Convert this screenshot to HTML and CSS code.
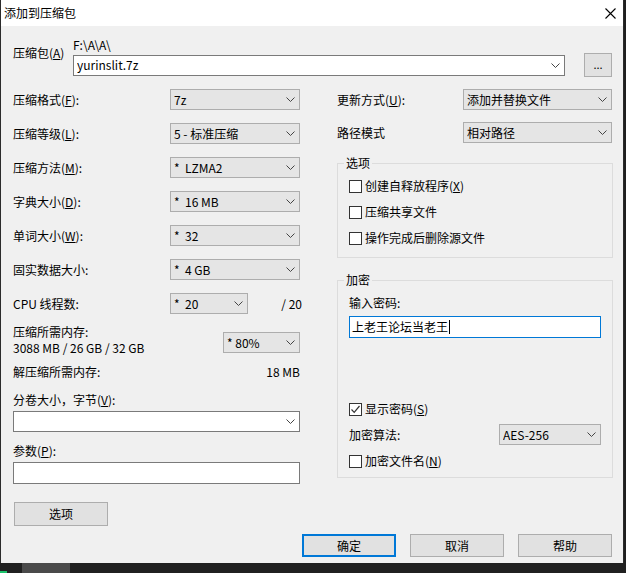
FILE: index.html
```html
<!DOCTYPE html>
<html lang="zh-CN">
<head>
<meta charset="utf-8">
<title>添加到压缩包</title>
<link rel="stylesheet" href="styles.css">
</head>
<body>
<div class="window">
  <div class="titlebar">
    <span class="title">添加到压缩包</span>
    <span class="close"><svg width="11" height="11" viewBox="0 0 11 11"><path d="M0.5 0.5 L10.5 10.5 M10.5 0.5 L0.5 10.5" stroke="#000" stroke-width="1.1" fill="none"/></svg></span>
  </div>
  <div class="content">
    <div class="archive-row">
      <div class="archive-label">压缩包(<u>A</u>)</div>
      <div class="archive-fields">
        <div class="path">F:\A\A\</div>
        <div class="archive-input-row">
          <div class="combo white archive-combo"><span class="val">yurinslit.7z</span><svg class="arrow" width="9" height="5" viewBox="0 0 9 5"><polyline points="0.5,0.5 4.5,4.5 8.5,0.5" fill="none" stroke="#444" stroke-width="1"/></svg></div>
          <div class="btn browse">...</div>
        </div>
      </div>
    </div>

    <div class="columns">
      <div class="left">
        <div class="frow"><span class="lbl">压缩格式(<u>F</u>):</span><div class="combo c130"><span class="val">7z</span><svg class="arrow" width="9" height="5" viewBox="0 0 9 5"><polyline points="0.5,0.5 4.5,4.5 8.5,0.5" fill="none" stroke="#444" stroke-width="1"/></svg></div></div>
        <div class="frow"><span class="lbl">压缩等级(<u>L</u>):</span><div class="combo c130"><span class="val">5 - 标准压缩</span><svg class="arrow" width="9" height="5" viewBox="0 0 9 5"><polyline points="0.5,0.5 4.5,4.5 8.5,0.5" fill="none" stroke="#444" stroke-width="1"/></svg></div></div>
        <div class="frow"><span class="lbl">压缩方法(<u>M</u>):</span><div class="combo c130"><span class="val">*&nbsp; LZMA2</span><svg class="arrow" width="9" height="5" viewBox="0 0 9 5"><polyline points="0.5,0.5 4.5,4.5 8.5,0.5" fill="none" stroke="#444" stroke-width="1"/></svg></div></div>
        <div class="frow"><span class="lbl">字典大小(<u>D</u>):</span><div class="combo c130"><span class="val">*&nbsp; 16 MB</span><svg class="arrow" width="9" height="5" viewBox="0 0 9 5"><polyline points="0.5,0.5 4.5,4.5 8.5,0.5" fill="none" stroke="#444" stroke-width="1"/></svg></div></div>
        <div class="frow"><span class="lbl">单词大小(<u>W</u>):</span><div class="combo c130"><span class="val">*&nbsp; 32</span><svg class="arrow" width="9" height="5" viewBox="0 0 9 5"><polyline points="0.5,0.5 4.5,4.5 8.5,0.5" fill="none" stroke="#444" stroke-width="1"/></svg></div></div>
        <div class="frow"><span class="lbl">固实数据大小:</span><div class="combo c130"><span class="val">*&nbsp; 4 GB</span><svg class="arrow" width="9" height="5" viewBox="0 0 9 5"><polyline points="0.5,0.5 4.5,4.5 8.5,0.5" fill="none" stroke="#444" stroke-width="1"/></svg></div></div>
        <div class="frow cpu"><span class="lbl">CPU 线程数:</span><div class="combo c78"><span class="val">*&nbsp; 20</span><svg class="arrow" width="9" height="5" viewBox="0 0 9 5"><polyline points="0.5,0.5 4.5,4.5 8.5,0.5" fill="none" stroke="#444" stroke-width="1"/></svg></div><span class="total">/ 20</span></div>
        <div class="mem-row">
          <div class="mem-text"><div>压缩所需内存:</div><div>3088 MB / 26 GB / 32 GB</div></div>
          <div class="combo c77"><span class="val">* 80%</span><svg class="arrow" width="9" height="5" viewBox="0 0 9 5"><polyline points="0.5,0.5 4.5,4.5 8.5,0.5" fill="none" stroke="#444" stroke-width="1"/></svg></div>
        </div>
        <div class="decomp-row"><span>解压缩所需内存:</span><span>18 MB</span></div>
        <div class="plain-label split-label">分卷大小，字节(<u>V</u>):</div>
        <div class="combo white full"><span class="val"></span><svg class="arrow" width="9" height="5" viewBox="0 0 9 5"><polyline points="0.5,0.5 4.5,4.5 8.5,0.5" fill="none" stroke="#444" stroke-width="1"/></svg></div>
        <div class="plain-label param-label">参数(<u>P</u>):</div>
        <div class="textbox full"></div>
        <div class="btn options-btn">选项</div>
      </div>

      <div class="right">
        <div class="rrow"><span class="rlbl">更新方式(<u>U</u>):</span><div class="combo c149"><span class="val">添加并替换文件</span><svg class="arrow" width="9" height="5" viewBox="0 0 9 5"><polyline points="0.5,0.5 4.5,4.5 8.5,0.5" fill="none" stroke="#444" stroke-width="1"/></svg></div></div>
        <div class="rrow"><span class="rlbl">路径模式</span><div class="combo c149"><span class="val">相对路径</span><svg class="arrow" width="9" height="5" viewBox="0 0 9 5"><polyline points="0.5,0.5 4.5,4.5 8.5,0.5" fill="none" stroke="#444" stroke-width="1"/></svg></div></div>

        <fieldset class="group options-group">
          <legend>选项</legend>
          <div class="check-row"><span class="box"></span><span>创建自释放程序(<u>X</u>)</span></div>
          <div class="check-row"><span class="box"></span><span>压缩共享文件</span></div>
          <div class="check-row"><span class="box"></span><span>操作完成后删除源文件</span></div>
        </fieldset>

        <fieldset class="group enc-group">
          <legend>加密</legend>
          <div class="pw-label">输入密码:</div>
          <div class="textbox pw"><span>上老王论坛当老王</span><span class="caret"></span></div>
          <div class="check-row single show-pw"><span class="box"><svg width="11" height="11" viewBox="0 0 11 11"><polyline points="1.5,5.5 4.2,8.3 9.5,2" fill="none" stroke="#333" stroke-width="1.2"/></svg></span><span>显示密码(<u>S</u>)</span></div>
          <div class="enc-row"><span>加密算法:</span><div class="combo c102"><span class="val">AES-256</span><svg class="arrow" width="9" height="5" viewBox="0 0 9 5"><polyline points="0.5,0.5 4.5,4.5 8.5,0.5" fill="none" stroke="#444" stroke-width="1"/></svg></div></div>
          <div class="check-row single enc-names"><span class="box"></span><span>加密文件名(<u>N</u>)</span></div>
        </fieldset>
      </div>
    </div>

    <div class="buttons">
      <div class="btn default">确定</div>
      <div class="btn">取消</div>
      <div class="btn">帮助</div>
    </div>
  </div>
</div>
<div class="taskbar"><span class="green"></span><span class="task"></span></div>
</body>
</html>
```
FILE: styles.css
```css
* { box-sizing: border-box; }

body {
  margin: 0;
  width: 626px;
  height: 573px;
  overflow: hidden;
  background: #1f1f1f;
  font-family: "Noto Sans CJK SC", "Noto Sans", sans-serif;
  font-size: 12px;
  line-height: 16px;
  color: #000;
}

u { text-decoration: underline; text-underline-offset: 1px; }

.window {
  width: 624px;
  height: 563px;
  background: #f0f0f0;
  border-left: 1px solid #2b2b2b;
  border-right: 1px solid #2b2b2b;
  display: flex;
  flex-direction: column;
  overflow: hidden;
}

.titlebar {
  height: 26px;
  flex: none;
  background: #fff;
  display: flex;
  align-items: center;
  justify-content: space-between;
  padding-left: 3px;
}
.title { font-size: 12px; }
.close {
  width: 26px;
  height: 26px;
  display: flex;
  align-items: center;
  justify-content: center;
}

.content {
  flex: 1;
  padding: 12px 10px 0 12px;
}

/* archive row */
.archive-row { display: flex; }
.archive-label { width: 60px; padding-top: 7px; }
.archive-fields { display: flex; flex-direction: column; }
.path { line-height: 14px; height: 14px; }
.archive-input-row { display: flex; align-items: center; margin-top: 1px; }
.archive-combo { width: 492px; }
.browse {
  width: 28px;
  height: 24px;
  margin-left: 19px;
  font-size: 11px;
  padding-bottom: 2px;
}

/* combos */
.combo {
  height: 21px;
  background: #e5e5e5;
  border: 1px solid #adadad;
  display: flex;
  align-items: center;
  padding-left: 3px;
  white-space: nowrap;
}
.combo .val { flex: 1; overflow: hidden; }
.combo .arrow { flex: none; margin-right: 4px; }
.combo.white { background: #fff; border-color: #7a7a7a; }
.c130 { width: 130px; }
.c78 { width: 78px; }
.c77 { width: 77px; }
.c149 { width: 149px; }
.c102 { width: 102px; }
.full { width: 287px; }

.textbox {
  background: #fff;
  border: 1px solid #7a7a7a;
  height: 22px;
}

/* buttons */
.btn {
  background: #e1e1e1;
  border: 1px solid #adadad;
  display: flex;
  align-items: center;
  justify-content: center;
}

/* columns */
.columns { display: flex; gap: 37px; margin-top: 12px; }
.left { width: 287px; display: flex; flex-direction: column; }
.right { width: 276px; display: flex; flex-direction: column; }

.frow { display: flex; align-items: center; height: 21px; margin-bottom: 13px; }
.frow .lbl { width: 157px; }
.frow.cpu { margin-bottom: 0; }
.total { flex: 1; text-align: right; margin-right: -2px; }

.mem-row { display: flex; justify-content: space-between; align-items: flex-start; margin-top: 10px; }
.mem-text { line-height: 16px; }
.mem-row .combo { margin-top: 8px; }
.decomp-row { display: flex; justify-content: space-between; line-height: 15px; margin-top: 8px; }
.plain-label { line-height: 15px; }
.split-label { margin-top: 13px; margin-bottom: 4px; }
.param-label { margin-top: 11px; margin-bottom: 4px; }
.options-btn { width: 94px; height: 24px; margin-top: 18px; margin-left: 1px; }

/* right column */
.rrow { display: flex; align-items: center; height: 21px; margin-bottom: 12px; }
.rrow:nth-child(2) { margin-bottom: 0; }
.rlbl { width: 126px; }

.group {
  margin: 0;
  border: 1px solid #dcdcdc;
  min-inline-size: 0;
}
.group legend {
  padding: 0 2px;
  margin-left: -5px;
  line-height: 16px;
}
.options-group { margin-top: 12px; padding: 2px 11px 6px 11px; }
.enc-group { margin-top: 14px; padding: 7px 11px 8px 11px; }

.check-row { display: flex; align-items: center; height: 26px; }
.check-row.single { height: 16px; }
.box {
  width: 13px;
  height: 13px;
  border: 1px solid #333;
  background: #fff;
  margin-right: 3px;
  display: flex;
  align-items: center;
  justify-content: center;
  flex: none;
}

.pw-label { line-height: 16px; }
.textbox.pw {
  margin-top: 5px;
  width: 252px;
  border-color: #0078d7;
  display: flex;
  align-items: center;
  padding-left: 2px;
}
.caret { width: 1px; height: 14px; background: #000; margin-left: 1px; }
.show-pw { margin-top: 63px; }
.enc-row { display: flex; justify-content: space-between; align-items: center; height: 21px; margin-top: 7px; }
.enc-names { margin-top: 8px; }

/* bottom buttons */
.buttons {
  display: flex;
  justify-content: flex-end;
  gap: 14px;
  margin-top: 8px;
  padding-right: 1px;
}
.buttons .btn { width: 94px; height: 23px; }
.buttons .btn.default { border: 2px solid #0078d7; }

/* taskbar strip */
.taskbar {
  height: 10px;
  display: flex;
  align-items: stretch;
  background: #202020;
}
.taskbar .green { width: 7px; height: 2px; align-self: flex-end; background: #1bc36b; }
.taskbar .task { width: 48px; margin-left: 15px; background: #4a4a4a; }
```
